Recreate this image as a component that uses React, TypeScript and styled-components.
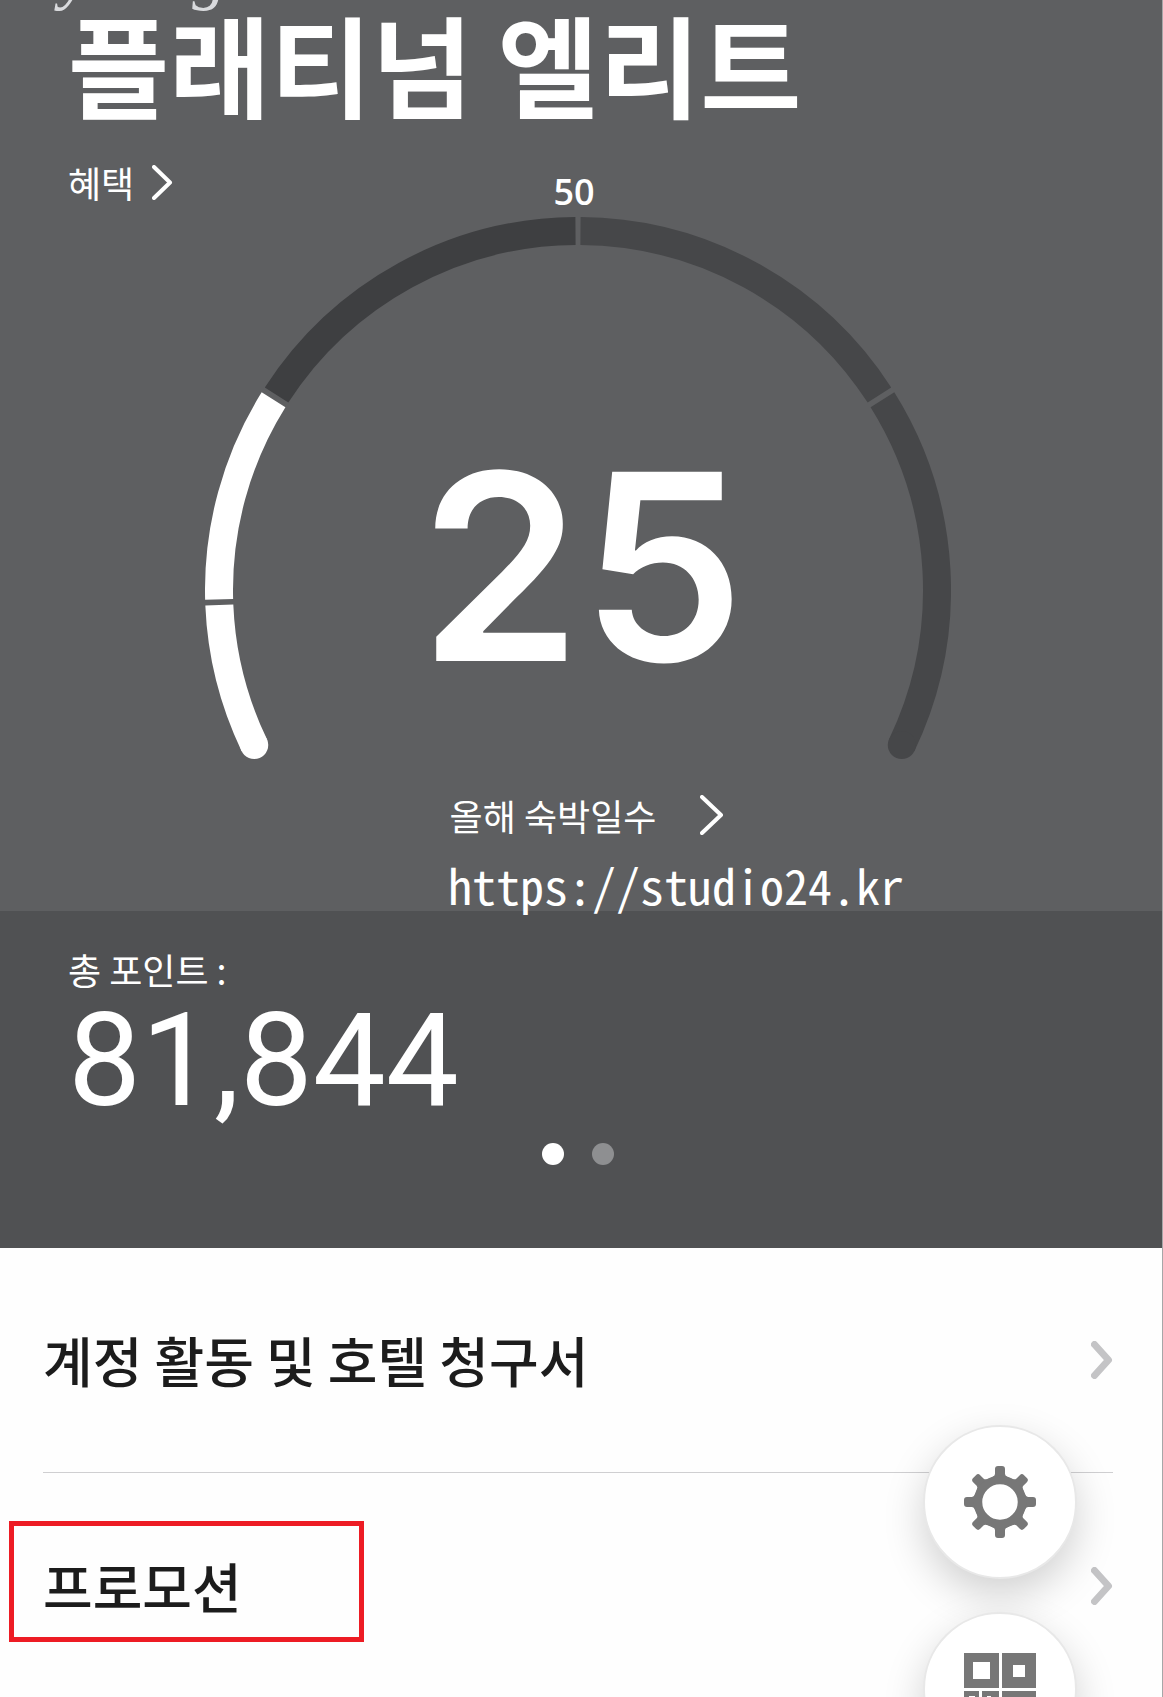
import React from "react";
import styled, { createGlobalStyle } from "styled-components";

const korean = `"Noto Sans CJK KR", sans-serif`;
const latin = `Inter, "Noto Sans CJK KR", sans-serif`;

const GlobalStyle = createGlobalStyle`
  * { box-sizing: border-box; }
  body { margin: 0; background: #fefefe; font-family: ${korean}; }
  button { font: inherit; color: inherit; border: 0; padding: 0; background: none; cursor: pointer; }
  a { color: inherit; text-decoration: none; }
`;

const Page = styled.div`
  position: relative;
  height: 100vh;
  overflow: hidden;
  border-right: 1px solid #a6a6a8;
`;

const Status = styled.header`
  position: relative;
  z-index: 1;
  height: 911px;
  padding-right: 6px;
  background: #5e5f61;
  color: #fff;
`;

const MemberName = styled.p`
  margin: 0 0 0 60px;
  height: 4px;
  display: flex;
  align-items: flex-end;
  font: italic 68px/60px "Liberation Serif", serif;
  color: #d9dadd;
`;

const Tier = styled.h1`
  margin: 0 0 0 68px;
  font-size: 110px;
  line-height: 116px;
  font-weight: 700;
  white-space: nowrap;
`;

const TextLink = styled.a<{ $gap: number }>`
  display: inline-flex;
  align-items: center;
  gap: ${(p) => p.$gap}px;
  font-size: 36px;
  line-height: 48px;
`;

const Benefits = styled.div`
  margin: 38px 0 0 68px;
  height: 0;
`;

const Gauge = styled.section`
  display: flex;
  flex-direction: column;
  align-items: center;
`;

const GaugeTop = styled.span`
  margin-top: 12px;
  padding-right: 8px;
  font: 600 36px/44px "Open Sans", sans-serif;
`;

const Dial = styled.div`
  display: grid;
  place-items: center;
  margin-top: 3px;
  width: 746px;
  height: 546px;
  > * { grid-area: 1 / 1; }
`;

const Nights = styled.strong`
  font: 600 260px/300px ${latin};
  padding: 154px 0 0 8px;
`;

const NightsLabel = styled.div`
  margin-top: 28px;
  padding-left: 18px;
`;

const Watermark = styled.p`
  margin: 13px 0 0 448px;
  font: 300 48px/64px "Noto Sans Mono CJK KR", "Liberation Mono", monospace;
  white-space: nowrap;
`;

const Points = styled.section`
  height: 337px;
  padding: 34px 6px 0 68px;
  background: #505153;
  color: #fff;
`;

const PointsLabel = styled.p`
  margin: 0;
  font-size: 36px;
  line-height: 48px;
`;

const PointsValue = styled.p`
  margin: 0;
  font: 400 130px/136px Roboto, sans-serif;
`;

const Dots = styled.div`
  display: flex;
  justify-content: center;
  gap: 28px;
  margin: 14px 0 0 -68px;
`;

const Dot = styled.button<{ $on?: boolean }>`
  && { background: ${(p) => (p.$on ? "#fff" : "#8e8f91")}; }
  width: 22px;
  height: 22px;
  border-radius: 50%;
`;

const Menu = styled.nav`
  padding: 0 49px 0 43px;
  color: #1c1c1c;
`;

const MenuRow = styled.a`
  position: relative;
  display: flex;
  align-items: center;
  justify-content: space-between;
  height: 225px;
  font-size: 54px;
  font-weight: 500;
  line-height: 72px;
  border-bottom: 1px solid #cfcfd1;
  &:last-child { border-bottom: 0; }
`;

const Highlight = styled.span`
  position: absolute;
  left: -34px;
  top: 48px;
  width: 355px;
  height: 121px;
  border: 5px solid #ed1c24;
`;

const Floating = styled.div`
  position: absolute;
  top: 1425px;
  right: 85px;
  display: grid;
  gap: 33px;
`;

const RoundButton = styled.button`
  display: grid;
  place-items: center;
  width: 154px;
  height: 154px;
  && { border: 2px solid #e8e8e8; background: #fff; }
  border-radius: 50%;
  box-shadow: 0 16px 40px rgba(0, 0, 0, 0.18);
`;

const CX = 373;
const R = 359;
const at = (deg: number) => {
  const a = (deg * Math.PI) / 180;
  return `${CX + R * Math.sin(a)} ${CX - R * Math.cos(a)}`;
};
const arc = (from: number, to: number) => `M${at(from)}A${R} ${R} 0 0 1 ${at(to)}`;
const segments = [
  { from: -115.6, to: -92.4, color: "#fff", cap: -115.6 },
  { from: -91.5, to: -58, color: "#fff" },
  { from: -57.1, to: -0.4, color: "#3e3f41" },
  { from: 0.4, to: 57.1, color: "#464749" },
  { from: 58, to: 115.6, color: "#464749", cap: 115.6 },
];

function DialArc() {
  return (
    <svg width="746" height="546" viewBox="0 0 746 546" fill="none" aria-hidden="true">
      {segments.map((s) => (
        <g key={s.from} stroke={s.color} strokeWidth="28">
          <path d={arc(s.from, s.to)} />
          {s.cap && <path d={`M${at(s.cap)}h0.01`} strokeLinecap="round" />}
        </g>
      ))}
    </svg>
  );
}

function Chevron({ w = 22, h = 38, stroke = 4, color = "#fff" }) {
  const p = stroke / 2;
  return (
    <svg width={w} height={h} viewBox={`0 0 ${w} ${h}`} fill="none" aria-hidden="true">
      <path
        d={`M${p} ${p}L${w - p - 1} ${h / 2}L${p} ${h - p}`}
        stroke={color}
        strokeWidth={stroke}
        strokeLinecap="round"
        strokeLinejoin="round"
      />
    </svg>
  );
}

function Gear() {
  return (
    <svg width="72" height="72" viewBox="-36 -36 72 72" aria-hidden="true">
      <g fill="#777">
        {[0, 45, 90, 135, 180, 225, 270, 315].map((a) => (
          <path key={a} transform={`rotate(${a})`} d="M-5-33q0-3 3-3h4q3 0 3 3v5q0 2 3 3l3 2v5h-22v-5l3-2q3-1 3-3z" />
        ))}
      </g>
      <circle r="22" fill="none" stroke="#777" strokeWidth="8.5" />
    </svg>
  );
}

function QrCode() {
  return (
    <svg width="72" height="72" viewBox="0 0 72 72" fill="#777" fillRule="evenodd" aria-hidden="true">
      <path d="M0 0h35v35H0zM9 9v17h17V9z" />
      <path d="M38 0h34v35H38zM49 12v12h12V12z" />
      <path d="M0 38h15v34H0zM5 43v5h6v-5z" />
      <path d="M18 38h17v34H18zM23 43v8h4v-8z" />
      <path d="M38 38h34v34H38zM47 47v16h16V47z" />
    </svg>
  );
}

export default function App() {
  return (
    <Page>
      <GlobalStyle />
      <Status>
        <MemberName>young</MemberName>
        <Tier>플래티넘 엘리트</Tier>
        <Benefits>
          <TextLink href="#benefits" $gap={18}>
            혜택 <Chevron w={21} h={35} />
          </TextLink>
        </Benefits>
        <Gauge>
          <GaugeTop>50</GaugeTop>
          <Dial>
            <DialArc />
            <Nights>25</Nights>
          </Dial>
          <NightsLabel>
            <TextLink href="#nights" $gap={44}>
              올해 숙박일수 <Chevron w={24} h={40} />
            </TextLink>
          </NightsLabel>
        </Gauge>
        <Watermark>https://studio24.kr</Watermark>
      </Status>
      <Points>
        <PointsLabel>총 포인트 :</PointsLabel>
        <PointsValue>81,844</PointsValue>
        <Dots>
          <Dot $on aria-label="1" />
          <Dot aria-label="2" />
        </Dots>
      </Points>
      <Menu>
        <MenuRow href="#activity">
          계정 활동 및 호텔 청구서
          <Chevron stroke={7} color="#c4c4c6" />
        </MenuRow>
        <MenuRow href="#promotions">
          프로모션
          <Chevron stroke={7} color="#c4c4c6" />
          <Highlight />
        </MenuRow>
      </Menu>
      <Floating>
        <RoundButton aria-label="설정">
          <Gear />
        </RoundButton>
        <RoundButton aria-label="QR">
          <QrCode />
        </RoundButton>
      </Floating>
    </Page>
  );
}
